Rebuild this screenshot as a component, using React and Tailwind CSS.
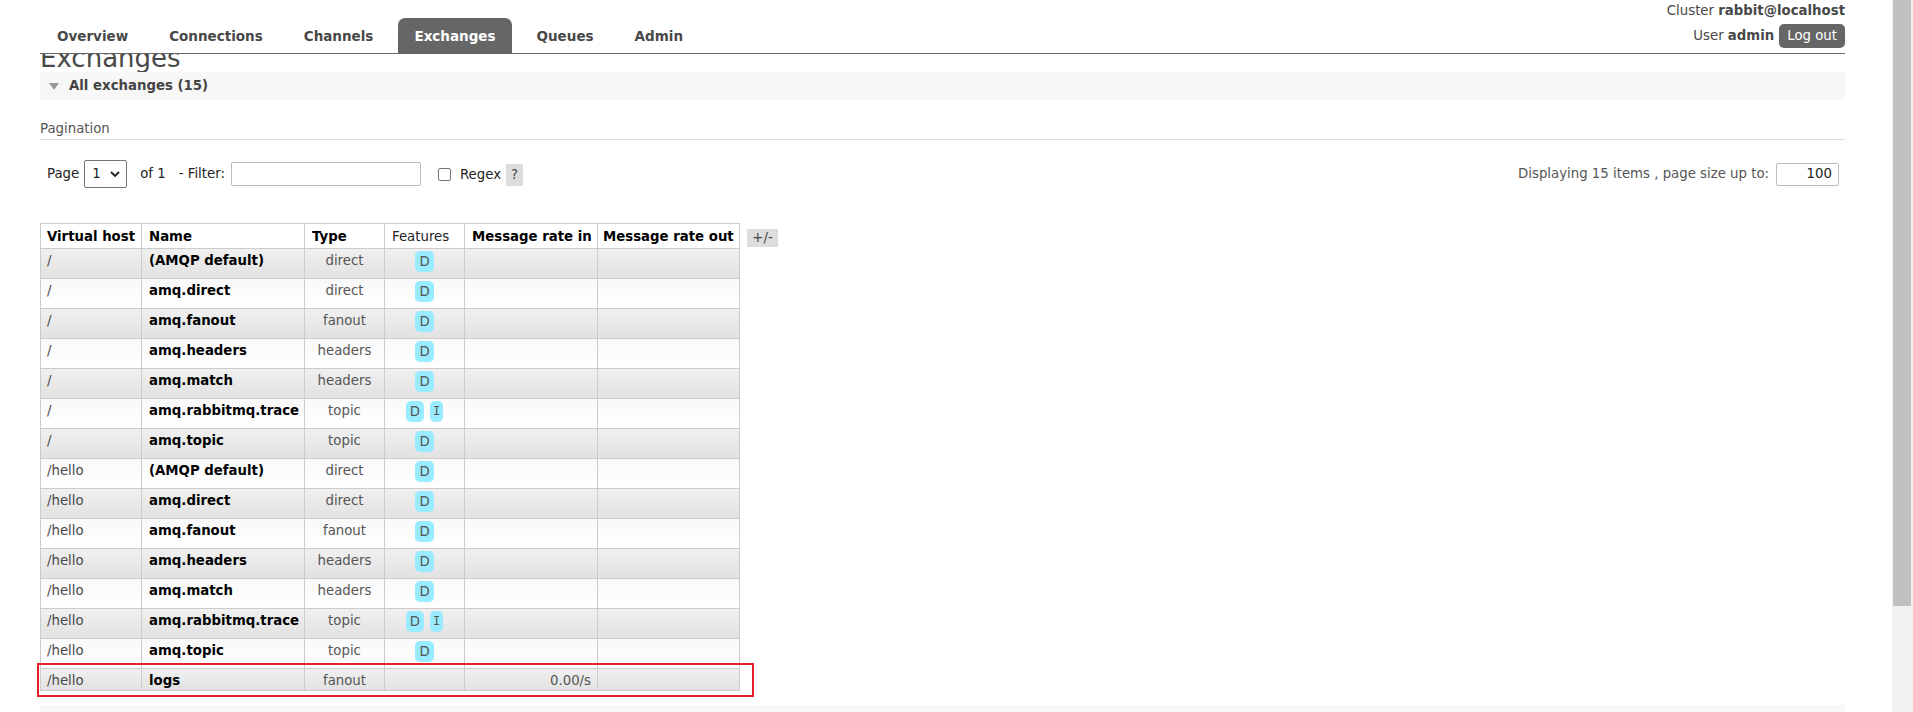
import React from "react";

const rows = [
  ["/", "(AMQP default)", "direct", ["D"], ""],
  ["/", "amq.direct", "direct", ["D"], ""],
  ["/", "amq.fanout", "fanout", ["D"], ""],
  ["/", "amq.headers", "headers", ["D"], ""],
  ["/", "amq.match", "headers", ["D"], ""],
  ["/", "amq.rabbitmq.trace", "topic", ["D", "I"], ""],
  ["/", "amq.topic", "topic", ["D"], ""],
  ["/hello", "(AMQP default)", "direct", ["D"], ""],
  ["/hello", "amq.direct", "direct", ["D"], ""],
  ["/hello", "amq.fanout", "fanout", ["D"], ""],
  ["/hello", "amq.headers", "headers", ["D"], ""],
  ["/hello", "amq.match", "headers", ["D"], ""],
  ["/hello", "amq.rabbitmq.trace", "topic", ["D", "I"], ""],
  ["/hello", "amq.topic", "topic", ["D"], ""],
  ["/hello", "logs", "fanout", [], "0.00/s"],
];

const navItems = ["Overview", "Connections", "Channels", "Exchanges", "Queues", "Admin"];

function Header() {
  return (
    <div className="flex h-[54px] items-stretch justify-between border-b border-[#666]">
      <div className="flex items-end gap-[9px] pl-[1px]">
        {navItems.map((n) =>
          n === "Exchanges" ? (
            <div
              key={n}
              className="flex h-[35px] items-center rounded-t-[7px] bg-[#666] px-[16px] pt-[2px] text-[13.5px] font-bold text-white"
            >
              {n}
            </div>
          ) : (
            <div key={n} className="flex h-[35px] items-center px-[16px] pt-[2px] text-[13.5px] font-bold text-[#484848]">
              {n}
            </div>
          )
        )}
      </div>
      <div className="flex flex-col items-end pt-[2px]">
        <div className="leading-[18px]">
          Cluster <span className="font-bold">rabbit@localhost</span>
        </div>
        <div className="mt-[4px] flex items-center gap-[5px]">
          <span>
            User <span className="font-bold">admin</span>
          </span>
          <span className="flex h-[24px] items-center rounded-[5px] bg-[#666] px-[8px] text-white">Log out</span>
        </div>
      </div>
    </div>
  );
}

function Badge({ t }) {
  if (t === "I") {
    return (
      <span className="inline-block h-[21px] rounded-[5px] bg-[#99ebff] px-[3px] font-['DejaVu_Sans_Mono',monospace] text-[12px] leading-[21px] text-[#555]">
        {t}
      </span>
    );
  }
  return (
    <span className="inline-block h-[21px] rounded-[5px] bg-[#99ebff] px-[4px] leading-[21px] text-[#555]">{t}</span>
  );
}

function ExTable() {
  return (
    <div className="relative flex items-start gap-[7px]">
      <table className="table-fixed border-collapse border border-[#ccc] leading-[18px]">
        <colgroup>
          <col className="w-[101px]" />
          <col className="w-[163px]" />
          <col className="w-[80px]" />
          <col className="w-[80px]" />
          <col className="w-[133px]" />
          <col className="w-[142px]" />
        </colgroup>
        <thead>
          <tr className="h-[25px] bg-white">
            <th className="whitespace-nowrap border border-[#ccc] pl-[6px] pr-[4px] pt-[1px] text-left align-middle font-bold text-black">
              Virtual host
            </th>
            <th className="border border-[#ccc] pl-[7px] pt-[1px] text-left align-middle font-bold text-black">Name</th>
            <th className="border border-[#ccc] pl-[7px] pt-[1px] text-left align-middle font-bold text-black">Type</th>
            <th className="border border-[#ccc] pl-[7px] pt-[1px] text-left align-middle font-normal text-[#222]">Features</th>
            <th className="whitespace-nowrap border border-[#ccc] pl-[7px] pt-[1px] text-left align-middle font-bold text-black">
              Message rate in
            </th>
            <th className="whitespace-nowrap border border-[#ccc] pl-[5px] pt-[1px] text-left align-middle font-bold text-black">
              Message rate out
            </th>
          </tr>
        </thead>
        <tbody>
          {rows.map((r, i) => {
            const odd = i % 2 === 0;
            const last = i === rows.length - 1;
            return (
              <tr
                key={i}
                className={
                  (last ? "h-[22px] " : "h-[30px] ") +
                  (odd
                    ? "bg-linear-to-b from-[#f0f0f0] to-[#e1e1e1]"
                    : "bg-linear-to-b from-[#f9f9f9] to-[#ffffff]")
                }
              >
                <td className="border border-[#ccc] pl-[6px] pt-[3px] align-top whitespace-nowrap text-[#484848]">{r[0]}</td>
                <td className="border border-[#ccc] pl-[7px] pt-[3px] align-top whitespace-nowrap font-bold text-black">{r[1]}</td>
                <td className="border border-[#ccc] pt-[3px] text-center align-top text-[#555]">{r[2]}</td>
                <td className="border border-[#ccc] pt-[2px] align-top">
                  <div className="flex justify-center gap-[6px]">
                    {r[3].map((b) => (
                      <Badge key={b} t={b} />
                    ))}
                  </div>
                </td>
                <td className="border border-[#ccc] pr-[6px] pt-[3px] text-right align-top text-[#555]">{r[4]}</td>
                <td className="border border-[#ccc] pt-[3px] align-top"></td>
              </tr>
            );
          })}
        </tbody>
      </table>
      <div className="mt-[6px] flex h-[18px] w-[31px] items-center justify-center bg-[#ddd] text-[#444]">+/-</div>
      <div className="pointer-events-none absolute left-[-3px] top-[440px] h-[34px] w-[717px] border-2 border-[#e3202b]"></div>
    </div>
  );
}

export default function App() {
  return (
    <div className="flex h-[712px] w-[1913px] overflow-hidden bg-white font-['DejaVu_Sans',Verdana,sans-serif] text-[13.3px] text-[#484848]">
      <div className="min-w-0 flex-1">
        <div className="ml-[40px] w-[1805px]">
          <Header />
          <div className="h-[18px] overflow-hidden">
            <h1 className="-mt-[9px] text-[26px] font-normal leading-[26px] text-[#484848]">Exchanges</h1>
          </div>
          <div className="flex h-[28px] items-center gap-[10px] bg-[#f7f7f7] pl-[9px]">
            <svg width="10" height="7" viewBox="0 0 10 7">
              <polygon points="0,0 10,0 5,7" fill="#999" />
            </svg>
            <span className="font-bold text-[#444]">All exchanges (15)</span>
          </div>
          <div className="mt-[20px] border-b border-[#ddd] pb-[1px] leading-[18px] text-[#555]">Pagination</div>
          <div className="mt-[20px] flex h-[28px] items-center justify-between">
            <div className="flex items-center pl-[7px] text-[#222]">
              <span>Page</span>
              <div className="ml-[5px] flex h-[28px] w-[43px] items-center justify-between rounded-[2px] border border-[#767676] bg-white pl-[7px] pr-[6px] text-[#222]">
                <span>1</span>
                <svg width="10" height="6" viewBox="0 0 10 6">
                  <polyline points="1,1 5,5 9,1" fill="none" stroke="#222" strokeWidth="1.8" />
                </svg>
              </div>
              <span className="ml-[13px]">of 1</span>
              <span className="ml-[13px]">- Filter:</span>
              <div className="ml-[6px] h-[24px] w-[190px] rounded-[2px] border border-[#bbb] bg-white"></div>
              <div className="ml-[17px] h-[13px] w-[13px] rounded-[2px] border border-[#767676] bg-white"></div>
              <span className="ml-[9px] mt-[2px]">Regex</span>
              <span className="ml-[5px] mt-[2px] flex h-[22px] w-[17px] items-center justify-center bg-[#ddd] text-[#444]">?</span>
            </div>
            <div className="flex items-center pr-[6px]">
              <span className="text-[#555]">Displaying 15 items , page size up to:</span>
              <div className="ml-[7px] flex h-[23px] w-[63px] items-center justify-end rounded-[2px] border border-[#bbb] bg-white pr-[6px] text-[#222]">
                100
              </div>
            </div>
          </div>
          <div className="mt-[35px]">
            <ExTable />
          </div>
          <div className="mt-[14px] h-[20px] bg-[#f7f7f7]"></div>
        </div>
      </div>
      <div className="flex w-[21px] flex-col bg-[#f1f1f1]">
        <div className="ml-[1px] h-[606px] w-[18px] bg-[#c1c1c1]"></div>
      </div>
    </div>
  );
}
